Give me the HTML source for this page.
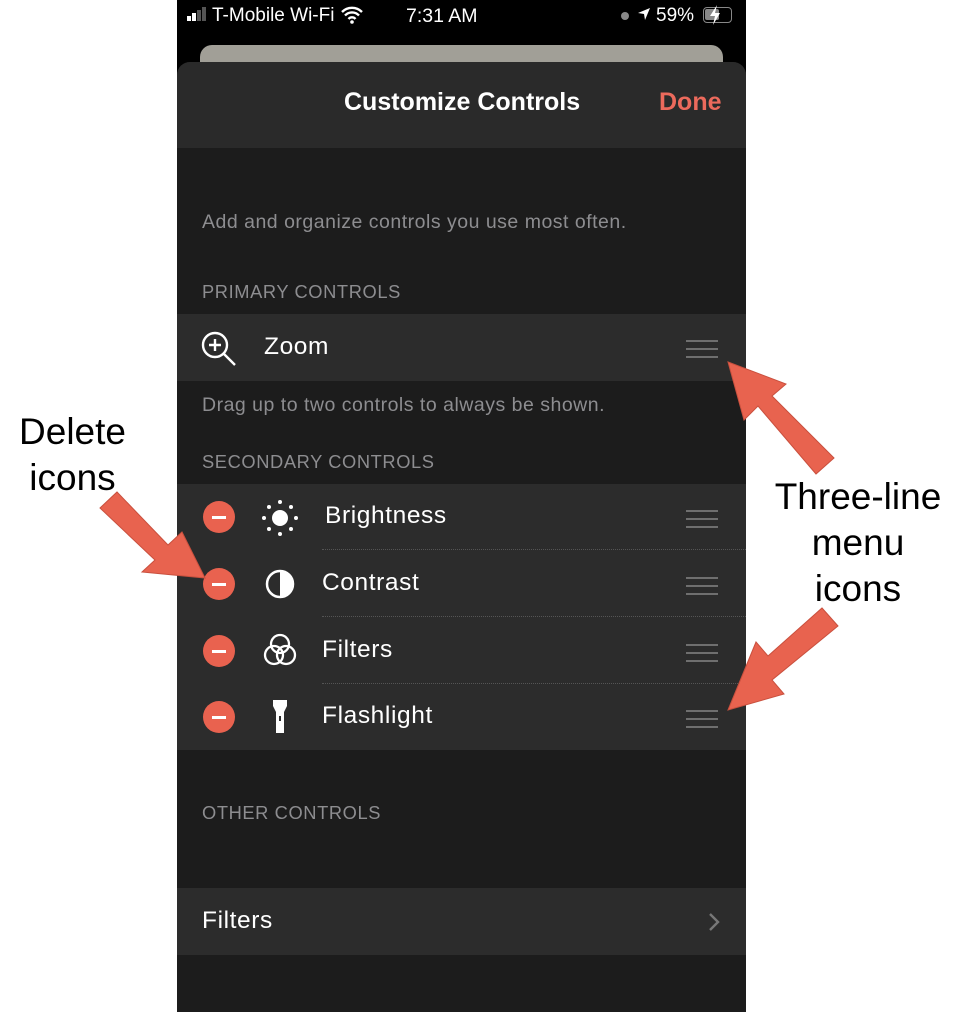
<!DOCTYPE html>
<html><head><style>
body{margin:0;width:962px;height:1012px;background:#fff;position:relative;overflow:hidden;font-family:"Liberation Sans",sans-serif}
.a{position:absolute}
.ph{left:177px;top:0;width:569px;height:1012px;background:#000}
.t{color:#fff;white-space:nowrap}
.g{color:#8d8d90;font-size:19.5px;white-space:nowrap;letter-spacing:0.5px}
.h{font-size:18.3px;letter-spacing:0.6px}
.row{left:177px;width:569px;background:#2c2c2c}
.lbl{color:#fff;font-size:24.5px;letter-spacing:0.6px}
.min{width:32px;height:32px;border-radius:50%;background:#e9624f;left:203px}
.min:after{content:"";position:absolute;left:9px;top:15px;width:14px;height:2.5px;background:#fff}
.ham{left:686px;width:32px;height:14px;border-top:2px solid #6f6f6f;border-bottom:2px solid #6f6f6f}
.ham:after{content:"";position:absolute;left:0;top:6px;width:32px;height:2px;background:#6f6f6f}
.sep{left:322px;width:424px;border-top:1px dotted #555}
.ann{color:#000;font-size:37px;text-align:center;line-height:46px}
</style></head><body>
<div class="a ph"></div>
<div class="a t" style="left:187px;top:5px;font-size:19px">
<span style="display:inline-block;width:4px;height:5px;background:#fff;margin-right:1px"></span><span style="display:inline-block;width:4px;height:8px;background:#fff;margin-right:1px"></span><span style="display:inline-block;width:4px;height:11px;background:#555;margin-right:1px"></span><span style="display:inline-block;width:4px;height:14px;background:#555;margin-right:6px"></span>T-Mobile Wi-Fi</div>
<svg class="a" style="left:340px;top:6px" width="24" height="18" viewBox="0 0 24 18"><path d="M2 6a14 14 0 0 1 20 0M5 9.5a9.5 9.5 0 0 1 14 0M8.5 13a4.5 4.5 0 0 1 7 0" stroke="#fff" stroke-width="2.4" fill="none"/><circle cx="12" cy="16" r="1.8" fill="#fff"/></svg>
<div class="a t" style="left:406px;top:5px;font-size:19.5px">7:31 AM</div>
<div class="a" style="left:621px;top:12px;width:8px;height:8px;border-radius:50%;background:#888"></div>
<svg class="a" style="left:637px;top:7px" width="14" height="14"><path d="M13 1L1 6l6 1 1 6z" fill="#fff"/></svg>
<div class="a t" style="left:656px;top:5px;font-size:19px">59%</div>
<div class="a" style="left:703px;top:7px;width:27px;height:14px;border:1.5px solid #888;border-radius:4px"></div>
<div class="a" style="left:705px;top:9px;width:14px;height:11px;background:#888;border-radius:2px"></div>
<svg class="a" style="left:708px;top:5px" width="14" height="20"><path d="M9 0L2 11h5l-2 9 7-12H7z" fill="#fff"/></svg>
<div class="a" style="left:200px;top:45px;width:523px;height:30px;background:#a19f97;border-radius:12px 12px 0 0"></div>
<div class="a" style="left:177px;top:62px;width:569px;height:950px;background:#1c1c1c;border-radius:13px 13px 0 0;overflow:hidden">
<div style="height:86px;background:#2a2a2a"></div></div>
<div class="a t" style="left:344px;top:88px;font-size:25px;font-weight:bold">Customize Controls</div>
<div class="a" style="left:659px;top:88px;font-size:25px;color:#ec6a5c;font-weight:bold">Done</div>
<div class="a g" style="left:202px;top:211px">Add and organize controls you use most often.</div>
<div class="a g h" style="left:202px;top:281px">PRIMARY CONTROLS</div>
<div class="a row" style="top:314px;height:67px"></div>
<svg class="a" style="left:200px;top:330px" width="40" height="38"><circle cx="15" cy="15" r="12" stroke="#fff" stroke-width="2.4" fill="none"/><path d="M24 24l11 11M15 9v12M9 15h12" stroke="#fff" stroke-width="2.4"/></svg>
<div class="a lbl" style="left:264px;top:333px">Zoom</div>
<div class="a ham" style="top:340px"></div>
<div class="a g" style="left:202px;top:394px">Drag up to two controls to always be shown.</div>
<div class="a g h" style="left:202px;top:451px">SECONDARY CONTROLS</div>
<div class="a row" style="top:484px;height:266px"></div>
<div class="a sep" style="top:549px"></div><div class="a sep" style="top:616px"></div><div class="a sep" style="top:683px"></div>
<div class="a min" style="top:501px"></div><div class="a min" style="top:568px"></div><div class="a min" style="top:635px"></div><div class="a min" style="top:701px"></div>
<svg class="a" style="left:260px;top:498px" width="40" height="40"><circle cx="20" cy="20" r="8" fill="#fff"/><g fill="#fff"><circle cx="20" cy="4" r="2"/><circle cx="20" cy="36" r="2"/><circle cx="4" cy="20" r="2"/><circle cx="36" cy="20" r="2"/><circle cx="9" cy="9" r="2"/><circle cx="31" cy="9" r="2"/><circle cx="9" cy="31" r="2"/><circle cx="31" cy="31" r="2"/></g></svg>
<svg class="a" style="left:262px;top:566px" width="36" height="36"><circle cx="18" cy="18" r="13" stroke="#fff" stroke-width="2.5" fill="none"/><path d="M18 5a13 13 0 0 1 0 26z" fill="#fff"/></svg>
<svg class="a" style="left:260px;top:632px" width="40" height="38"><g stroke="#fff" stroke-width="2.3" fill="none"><circle cx="20" cy="12" r="9"/><circle cx="14" cy="23" r="9"/><circle cx="26" cy="23" r="9"/></g></svg>
<svg class="a" style="left:270px;top:699px" width="20" height="36"><path d="M3 1h14v6l-3 6v21H6V13L3 7z" fill="#fff"/><rect x="9" y="17" width="2" height="5" fill="#2c2c2c"/></svg>
<div class="a lbl" style="left:325px;top:502px">Brightness</div>
<div class="a lbl" style="left:322px;top:569px">Contrast</div>
<div class="a lbl" style="left:322px;top:636px">Filters</div>
<div class="a lbl" style="left:322px;top:702px">Flashlight</div>
<div class="a ham" style="top:510px"></div><div class="a ham" style="top:577px"></div><div class="a ham" style="top:644px"></div><div class="a ham" style="top:710px"></div>
<div class="a g h" style="left:202px;top:802px">OTHER CONTROLS</div>
<div class="a row" style="top:888px;height:67px"></div>
<div class="a lbl" style="left:202px;top:907px">Filters</div>
<svg class="a" style="left:708px;top:912px" width="12" height="20"><path d="M2 2l8 8-8 8" stroke="#777" stroke-width="2.4" fill="none"/></svg>
<div class="a ann" style="left:0;top:409px;width:145px">Delete<br>icons</div>
<div class="a ann" style="left:760px;top:474px;width:196px">Three-line<br>menu<br>icons</div>
<svg class="a" style="left:0;top:0" width="962" height="1012">
<g fill="#e8634f" stroke="#c9503e" stroke-width="1">
<polygon points="834,458 816,474 758,406 744,420 728,362 786,384 772,396"/>
<polygon points="100,508 117,492 168,545 182,532 205,578 142,572 155,560"/>
<polygon points="838,626 822,608 768,656 756,642 728,710 784,694 772,680"/>
</g></svg>
</body></html>
